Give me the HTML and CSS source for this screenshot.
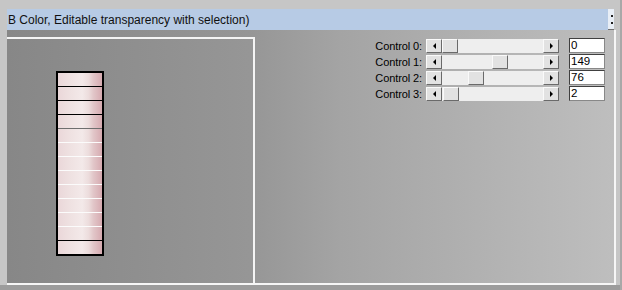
FILE: index.html
```html
<!DOCTYPE html>
<html lang="en">
<head>
  <meta charset="UTF-8" />
  <title>Editable transparency</title>
  <link rel="stylesheet" href="styles.css">
</head>
<body>
  <div class="frame">
    <div class="title-row">
      <div class="title-bar">
        <span class="title-text">B Color, Editable transparency with selection)</span>
      </div>
      <div class="title-btn"><span></span><span></span></div>
    </div>

    <div class="content">
      <div class="left-pane">
        <div class="strip">
          <div class="cell sep-black"></div>
          <div class="cell sep-black"></div>
          <div class="cell sep-black"></div>
          <div class="cell sep-gray"></div>
          <div class="cell sep-white"></div>
          <div class="cell sep-white"></div>
          <div class="cell sep-white"></div>
          <div class="cell sep-white"></div>
          <div class="cell sep-white"></div>
          <div class="cell sep-white"></div>
          <div class="cell sep-white"></div>
          <div class="cell sep-black"></div>
          <div class="cell last"></div>
        </div>
      </div>

      <div class="right-pane">
        <div class="controls">
          <label class="ctl-label">Control 0:</label>
          <div class="scrollbar">
            <div class="sb-btn"><i class="arrow-left"></i></div>
            <div class="sb-track"><div class="sb-thumb" style="margin-left: 0px"></div></div>
            <div class="sb-btn"><i class="arrow-right"></i></div>
          </div>
          <div class="ctl-edit">0</div>

          <label class="ctl-label">Control 1:</label>
          <div class="scrollbar">
            <div class="sb-btn"><i class="arrow-left"></i></div>
            <div class="sb-track"><div class="sb-thumb" style="margin-left: 50px"></div></div>
            <div class="sb-btn"><i class="arrow-right"></i></div>
          </div>
          <div class="ctl-edit">149</div>

          <label class="ctl-label">Control 2:</label>
          <div class="scrollbar">
            <div class="sb-btn"><i class="arrow-left"></i></div>
            <div class="sb-track"><div class="sb-thumb" style="margin-left: 26px"></div></div>
            <div class="sb-btn"><i class="arrow-right"></i></div>
          </div>
          <div class="ctl-edit">76</div>

          <label class="ctl-label">Control 3:</label>
          <div class="scrollbar">
            <div class="sb-btn"><i class="arrow-left"></i></div>
            <div class="sb-track"><div class="sb-thumb" style="margin-left: 1px"></div></div>
            <div class="sb-btn"><i class="arrow-right"></i></div>
          </div>
          <div class="ctl-edit">2</div>
        </div>
      </div>
    </div>
  </div>
</body>
</html>
```

FILE: styles.css
```css
* { margin: 0; padding: 0; box-sizing: border-box; }
body {
  width: 622px;
  height: 290px;
  overflow: hidden;
  background: #c6c6c6;
  font-family: 'Liberation Sans', Arial, sans-serif;
}
.frame {
  height: 290px;
  padding: 9px 4px 0 7px;
  display: flex;
  flex-direction: column;
  border-right: 2px solid #a8a8a8;
  background: linear-gradient(to top, #9c9c9c 5px, transparent 5px);
}

/* title */
.title-row {
  display: flex;
  height: 21px;
  padding-right: 2px;
}
.title-bar {
  flex: 1;
  background: #b7cbe5;
  overflow: hidden;
  white-space: nowrap;
  display: flex;
  align-items: center;
  padding-left: 1px;
}
.title-text {
  font-size: 12px;
  color: #101010;
}
.title-btn {
  width: 6px;
  background: #e8eef6;
  border-bottom: 1px solid #707070;
  display: flex;
  flex-direction: column;
  align-items: flex-end;
  justify-content: center;
  gap: 5px;
  padding-right: 1px;
}
.title-btn span {
  width: 2px;
  height: 2px;
  background: #202020;
}

/* content */
.content {
  height: 255px;
  display: flex;
  background: linear-gradient(to right, #878787, #969696 40%, #a4a4a4 55%, #bebebe);
  border-right: 2px solid #f6f6f6;
  border-bottom: 2px solid #f6f6f6;
}
.left-pane {
  width: 248px;
  margin-top: 7px;
  border-top: 2px solid #f4f4f4;
  border-right: 2px solid #f4f4f4;
  padding: 32px 0 0 49px;
}
.strip {
  width: 48px;
  border: 2px solid #000;
  display: flex;
  flex-direction: column;
}
.cell {
  height: 14px;
  background: linear-gradient(to right, #ead7d9, #efe2e2 30%, #f3e9e9 55%, #ecdcdc 70%, #e2c7c9 80%, #d6aab0);
}
.cell.last { height: 13px; }
.sep-black { border-bottom: 1px solid #000; }
.sep-gray { border-bottom: 1px solid #6e6e6e; }
.sep-white { border-bottom: 1px solid #fbfbfb; }

/* controls */
.right-pane {
  flex: 1;
  display: flex;
  justify-content: flex-end;
  padding: 8px 9px 0 0;
}
.controls {
  display: grid;
  grid-template-columns: auto 137px 46px;
  grid-auto-rows: 15px;
  row-gap: 1px;
  align-content: start;
  align-items: center;
}
.ctl-label {
  font-size: 11px;
  color: #000;
  text-align: right;
  letter-spacing: -0.1px;
}
.scrollbar {
  justify-self: end;
  height: 14px;
  width: 133px;
  display: flex;
}
.ctl-edit {
  justify-self: end;
  height: 15px;
  width: 36px;
  background: #fff;
  border: 1px solid #404040;
  border-right-color: #888;
  border-bottom-color: #888;
  font-size: 11.5px;
  line-height: 13px;
  padding-left: 1px;
  color: #000;
}
.sb-btn, .sb-thumb {
  width: 16px;
  height: 14px;
  background: #e2e2e2;
  border: 1px solid;
  border-color: #fafafa #6a6a6a #6a6a6a #fafafa;
  display: flex;
  align-items: center;
  justify-content: center;
  flex-shrink: 0;
}
.sb-track {
  flex: 1;
  display: flex;
  background: #eeeeee;
}
.arrow-left {
  width: 0;
  height: 0;
  border-top: 3px solid transparent;
  border-bottom: 3px solid transparent;
  border-right: 3px solid #000;
}
.arrow-right {
  width: 0;
  height: 0;
  border-top: 3px solid transparent;
  border-bottom: 3px solid transparent;
  border-left: 3px solid #000;
}
```
